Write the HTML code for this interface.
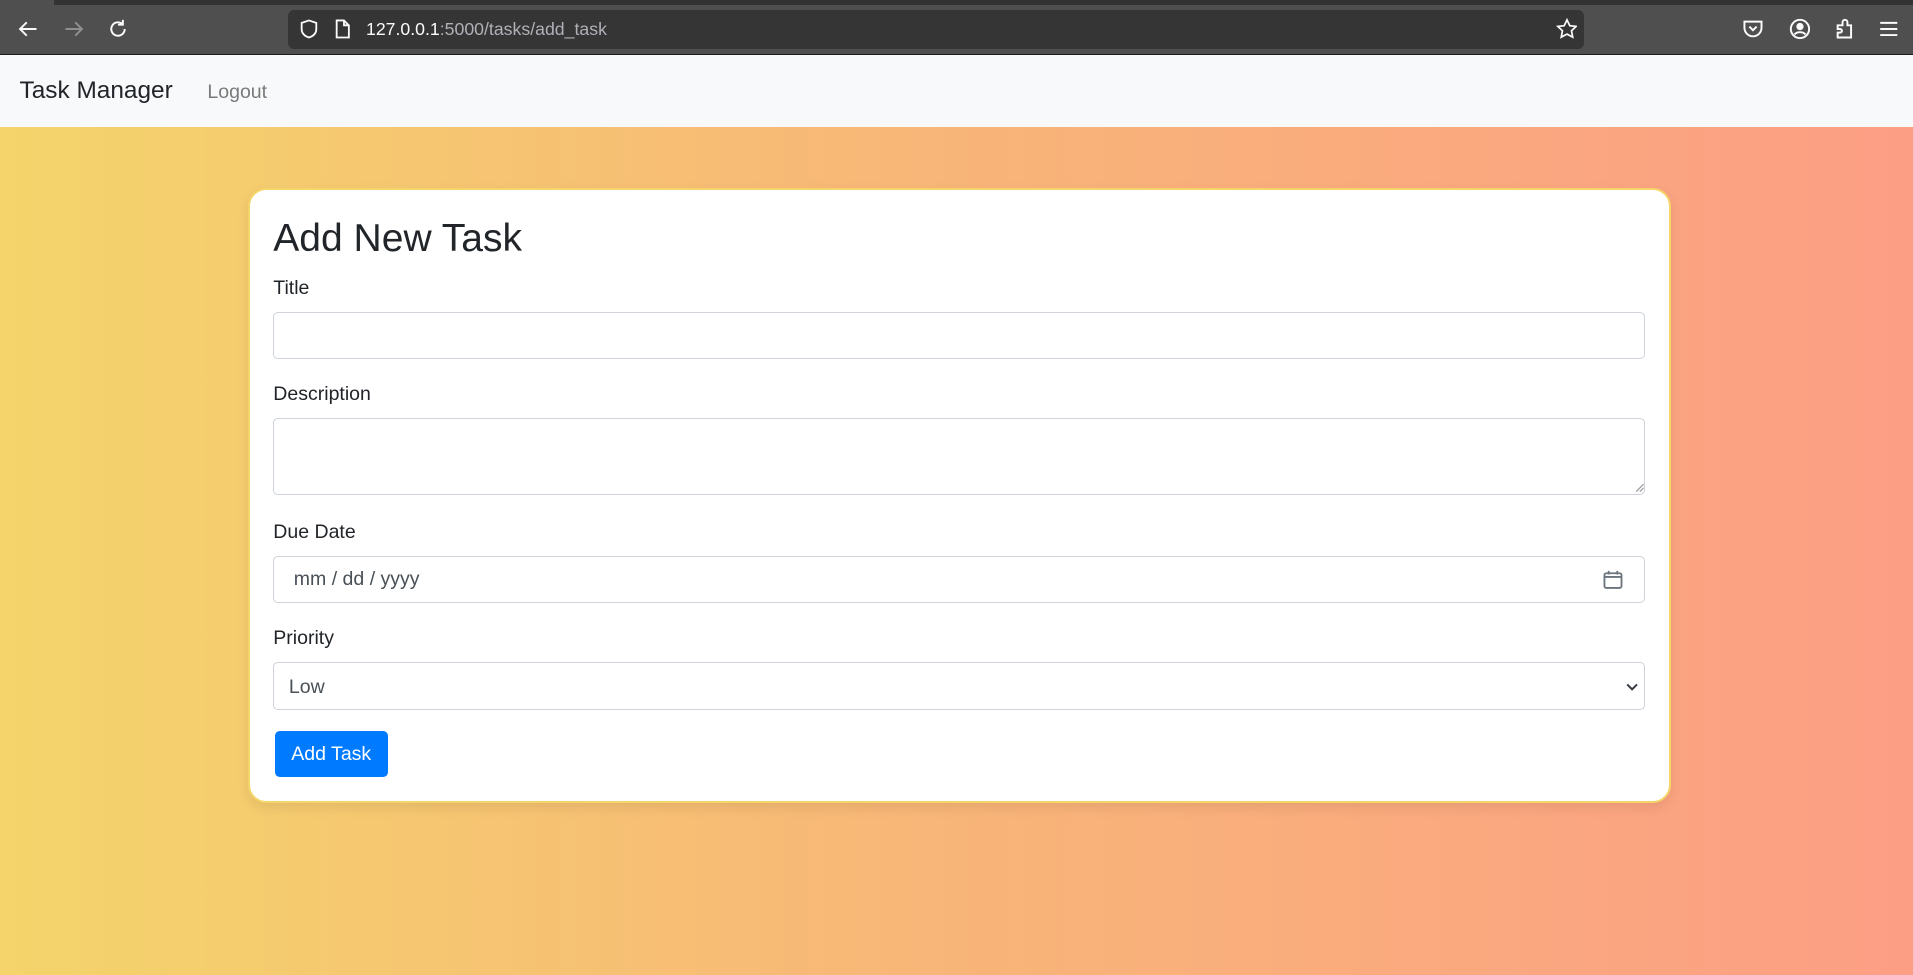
<!DOCTYPE html>
<html><head><meta charset="utf-8"><style>
html,body{margin:0;padding:0;overflow:hidden}
body{width:1913px;height:975px;font-family:"Liberation Sans",sans-serif}
#z{zoom:1.22;width:1568px;height:800px;position:relative;overflow:hidden}
.chrome{position:absolute;left:0;top:0;width:1568px;height:44px;background:#4f4f4f;border-bottom:1px solid #1c1c1c}
.strip{position:absolute;left:0;top:0;width:1568px;height:4px;background:#333}
.url{position:absolute;left:236px;top:8px;width:1062px;height:32px;background:#353535;border-radius:5px;color:#fbfbfe;font-size:14.5px;line-height:32px}
.nav{position:absolute;top:45px;left:0;width:1568px;height:59px;background:#f8f9fa}
.bg{position:absolute;top:104px;left:0;width:1568px;height:700px;background:linear-gradient(90deg,#f4d46b,#f8b578 50%,#fc9e84)}
.card{position:absolute;left:203px;top:154px;width:1163px;height:501px;background:#fff;border:2px solid #f5d56a;border-radius:15px;box-shadow:0 4px 10px rgba(0,0,0,.08)}
.lbl{position:absolute;left:224px;font-size:16px;color:#212529}
.inp{position:absolute;left:224px;width:1124px;background:#fff;border:1px solid #ced4da;border-radius:4px;box-sizing:border-box;font-size:16px;color:#495057}
svg{position:absolute}
</style></head><body><div id="z">
<div class="chrome"></div><div class="strip"></div>
<div style="position:absolute;left:0;top:0;width:44px;height:4px;background:#4f4f4f"></div>
<svg style="left:14px;top:15px" width="18" height="18" viewBox="0 0 18 18" fill="none" stroke="#fbfbfe" stroke-width="1.6"><path d="M16 9H3M8 3.5L2.5 9 8 14.5"/></svg>
<svg style="left:52px;top:15px" width="18" height="18" viewBox="0 0 18 18" fill="none" stroke="#8f8f8f" stroke-width="1.6"><path d="M2 9h13M10 3.5l5.5 5.5L10 14.5"/></svg>
<svg style="left:88px;top:15px" width="18" height="18" viewBox="0 0 18 18" fill="none" stroke="#fbfbfe" stroke-width="1.6"><path d="M14.5 9A5.5 5.5 0 1 1 12.5 4.8M13 1.5v4h-4"/></svg>
<div class="url"><span style="margin-left:64px">127.0.0.1<span style="color:#b0b0b8">:5000/tasks/add_task</span></span></div>
<svg style="left:244px;top:15px" width="18" height="18" viewBox="0 0 18 18" fill="none" stroke="#fbfbfe" stroke-width="1.5"><path d="M9 2l6 2v5c0 4-3 6-6 7-3-1-6-3-6-7V4z"/></svg>
<svg style="left:273px;top:15px" width="16" height="18" viewBox="0 0 16 18" fill="none" stroke="#fbfbfe" stroke-width="1.5"><path d="M3 2h6l4 4v10H3zM9 2v4h4"/></svg>
<svg style="left:1275px;top:15px" width="18" height="18" viewBox="0 0 18 18" fill="none" stroke="#fbfbfe" stroke-width="1.4"><path d="M9 1.5l2.3 4.8 5.2.6-3.8 3.6 1 5.2L9 13.2l-4.7 2.5 1-5.2L1.5 6.9l5.2-.6z"/></svg>
<svg style="left:1428px;top:15px" width="18" height="18" viewBox="0 0 18 18" fill="none" stroke="#fbfbfe" stroke-width="1.6"><path d="M2 3h14v5a7 7 0 0 1-14 0zM6 7l3 3 3-3"/></svg>
<svg style="left:1466px;top:15px" width="18" height="18" viewBox="0 0 18 18" fill="none" stroke="#fbfbfe" stroke-width="1.6"><circle cx="9" cy="9" r="7.5"/><circle cx="9" cy="7" r="2.2" fill="#fbfbfe"/><path d="M4.5 13.5c2-2.5 7-2.5 9 0"/></svg>
<svg style="left:1503px;top:15px" width="18" height="18" viewBox="0 0 18 18" fill="none" stroke="#fbfbfe" stroke-width="1.6"><path d="M3 6h4V3.5a2 2 0 0 1 4 0V6h3v10H3v-4h2a1.5 1.5 0 0 0 0-3H3z"/></svg>
<svg style="left:1540px;top:15px" width="16" height="18" viewBox="0 0 16 18" stroke="#fbfbfe" stroke-width="1.6"><path d="M1 4h14M1 9h14M1 14h14"/></svg>
<div class="nav"><span style="position:absolute;left:16px;top:18px;font-size:20px;color:#212529">Task Manager</span><span style="position:absolute;left:170px;top:21px;font-size:16px;color:#7a7a7a">Logout</span></div>
<div class="bg"></div>
<div class="card"></div>
<div style="position:absolute;left:224px;top:178px;font-size:32px;color:#212529">Add New Task</div>
<div class="lbl" style="top:227px">Title</div>
<div class="inp" style="top:256px;height:38px"></div>
<div class="lbl" style="top:314px">Description</div>
<div class="inp" style="top:343px;height:63px"></div>
<svg style="left:1340px;top:396px" width="8" height="8" stroke="#999" stroke-width="1"><path d="M7 1L1 7M7 4L4 7"/></svg>
<div class="lbl" style="top:427px">Due Date</div>
<div class="inp" style="top:456px;height:38px;padding:9px 0 0 16px;color:#495057">mm / dd / yyyy</div>
<svg style="left:1313px;top:466px" width="18" height="18" viewBox="0 0 18 18" fill="none" stroke="#6c757d" stroke-width="1.5"><rect x="2" y="3.5" width="14" height="12" rx="1.5"/><path d="M2 6.5h14M5.5 1.5v3M12.5 1.5v3"/></svg>
<div class="lbl" style="top:514px">Priority</div>
<div class="inp" style="top:543px;height:39px;padding:10px 0 0 12px">Low</div>
<svg style="left:1333px;top:559px" width="10" height="8" fill="none" stroke="#343a40" stroke-width="1.6"><path d="M1 2l4 4 4-4"/></svg>
<div style="position:absolute;left:225px;top:599px;width:93px;height:38px;background:#007bff;border-radius:4px;color:#fff;font-size:16px;line-height:38px;text-align:center">Add Task</div>
</div></body></html>
